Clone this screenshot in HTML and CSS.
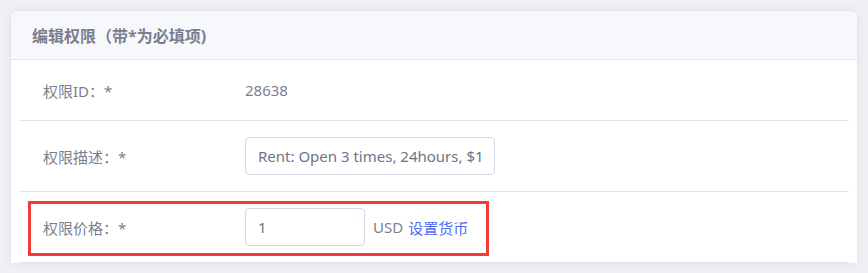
FILE: index.html
```html
<!DOCTYPE html>
<html lang="zh">
<head>
<meta charset="utf-8">
<link rel="stylesheet" href="styles.css">
</head>
<body>
<div class="card">
  <div class="card-header">编辑权限（带*为必填项)</div>
  <div class="card-body">
    <div class="row row-first">
      <div class="label">权限ID：*</div>
      <div class="value">28638</div>
    </div>
    <div class="row">
      <div class="label">权限描述：*</div>
      <div class="value"><input class="input input-wide" type="text" value="Rent: Open 3 times, 24hours, $1"></div>
    </div>
    <div class="row">
      <div class="label">权限价格：*</div>
      <div class="value">
        <input class="input input-narrow" type="text" value="1">
        <span class="unit">USD</span>
        <a class="link" href="#">设置货币</a>
      </div>
    </div>
  </div>
</div>
<div class="highlight"></div>
</body>
</html>
```

FILE: styles.css
```css
html, body {
  margin: 0;
  padding: 0;
}
body {
  background: #eef0f4;
  font-family: "Noto Sans", "Noto Sans CJK SC", sans-serif;
  color: #7b7f91;
  font-size: 15px;
  padding: 11px 11px 0 11px;
  height: 273px;
  box-sizing: border-box;
  overflow: hidden;
  position: relative;
}
.card {
  width: 846px;
  background: #fff;
  border-radius: 6px 6px 0 0;
  box-shadow: 0 0 8px rgba(120, 125, 150, 0.12);
}
.card-header {
  height: 49px;
  box-sizing: border-box;
  background: #f7f8fc;
  border-bottom: 1px solid #e3e4ee;
  border-radius: 6px 6px 0 0;
  padding-left: 21px;
  display: flex;
  align-items: center;
  font-size: 16px;
  font-weight: 700;
  color: #7a7e90;
}
.card-body {
  padding: 0 8px;
}
.row {
  height: 71px;
  box-sizing: border-box;
  border-bottom: 1px solid #e3e3ee;
  display: flex;
  align-items: center;
}
.row-first {
  height: 61px;
}
.label {
  width: 226px;
  box-sizing: border-box;
  padding-left: 24px;
  flex: none;
}
.value {
  display: flex;
  align-items: center;
}
.input {
  height: 38px;
  box-sizing: border-box;
  border: 1px solid #d6d6e4;
  border-radius: 4px;
  padding: 0 12px;
  font-family: "Noto Sans", "Noto Sans CJK SC", sans-serif;
  font-size: 15px;
  color: #6f7386;
  background: #fff;
  outline: none;
}
.input-wide {
  width: 250px;
}
.input-narrow {
  width: 120px;
}
.unit {
  margin-left: 8px;
}
.link {
  margin-left: 5px;
  color: #4f6cf0;
  text-decoration: none;
}
.highlight {
  position: absolute;
  left: 28px;
  top: 201px;
  width: 461px;
  height: 55px;
  box-sizing: border-box;
  border: 3px solid #f53a3a;
}
```
